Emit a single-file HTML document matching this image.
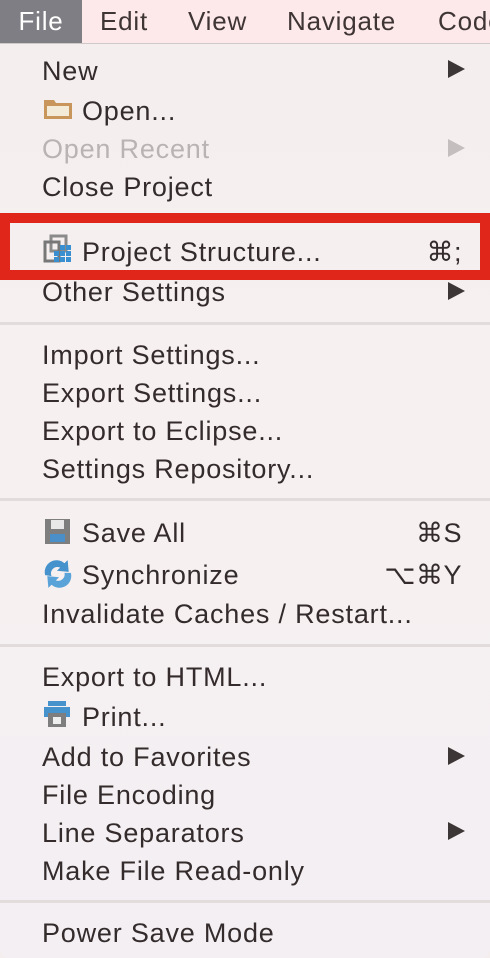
<!DOCTYPE html>
<html><head><meta charset="utf-8"><style>
html,body{margin:0;padding:0}
body{width:490px;height:958px;position:relative;overflow:hidden;background:#f4eeee;font-family:"Liberation Sans",Arial,sans-serif;}
.bg{position:absolute;left:0;top:44px;width:490px;height:914px;background:linear-gradient(180deg,#f4eeee 0%,#f7f0f0 40%,#f3eff3 100%);border-bottom-left-radius:10px;border-bottom-right-radius:10px}
.bar{position:absolute;left:0;top:0;width:490px;height:43px;background:#fde9ea;border-bottom:1.5px solid #cfc8c8}
.m{position:absolute;top:0;height:43px;line-height:43px;font-size:26px;letter-spacing:0.8px;color:#3f3535}
.file{left:0;width:82px;background:#7f7e84;color:#fff;text-align:center}
.r{position:absolute;left:42px;font-size:27px;letter-spacing:0.8px;line-height:30px;height:30px;color:#342c2c;white-space:nowrap}
.dis{color:#b9b3b3}
.ic{left:82px}
.sc{position:absolute;right:28px;font-size:27px;line-height:30px;color:#342c2c;letter-spacing:0.5px}
.tri{position:absolute;left:448px;width:0;height:0;border-top:9.5px solid transparent;border-bottom:9.5px solid transparent;border-left:17px solid #3d3636}
.sep{position:absolute;left:0;width:490px;height:3px;background:#e3dcdc}
.red{position:absolute;left:0;top:213px;width:470px;height:47px;border:10px solid #e0261a}
svg{position:absolute}
</style></head><body>
<div class="bg"></div>
<div class="bar"></div>
<div class="m file">File</div>
<div class="m" style="left:100px">Edit</div>
<div class="m" style="left:188px">View</div>
<div class="m" style="left:287px">Navigate</div>
<div class="m" style="left:438px">Code</div>

<div class="r" style="top:56px">New</div><div class="tri" style="top:60px"></div>
<svg style="left:43px;top:98px" width="30" height="22" viewBox="0 0 30 22"><path d="M1 2h10l2 3h16v16H1z" fill="#c8965a"/><rect x="4" y="8" width="22" height="10" fill="#f3ead8"/></svg>
<div class="r ic" style="top:96px">Open...</div>
<div class="r dis" style="top:134px">Open Recent</div><div class="tri" style="top:139px;border-left-color:#c4bebe"></div>
<div class="r" style="top:172px">Close Project</div>

<div class="red"></div>
<svg style="left:43px;top:234px" width="30" height="30" viewBox="0 0 30 30"><rect x="8" y="2" width="15" height="15" fill="none" stroke="#8a8a8a" stroke-width="3"/><rect x="2" y="8" width="14" height="19" fill="none" stroke="#777" stroke-width="3"/><g fill="#3a8fd0"><rect x="17" y="11" width="5" height="5"/><rect x="23" y="11" width="5" height="5"/><rect x="11" y="17" width="5" height="5"/><rect x="17" y="17" width="5" height="5"/><rect x="23" y="17" width="5" height="5"/><rect x="11" y="23" width="5" height="5"/><rect x="17" y="23" width="5" height="5"/><rect x="23" y="23" width="5" height="5"/></g></svg>
<div class="r ic" style="top:237px">Project Structure...</div><div class="sc" style="top:237px">⌘;</div>
<div class="r" style="top:277px">Other Settings</div><div class="tri" style="top:282px"></div>
<div class="sep" style="top:322px"></div>

<div class="r" style="top:340px">Import Settings...</div>
<div class="r" style="top:378px">Export Settings...</div>
<div class="r" style="top:416px">Export to Eclipse...</div>
<div class="r" style="top:454px">Settings Repository...</div>
<div class="sep" style="top:498px"></div>

<svg style="left:45px;top:519px" width="26" height="26" viewBox="0 0 26 26"><rect x="0" y="0" width="25" height="25" fill="#7e7e7e"/><rect x="6" y="1" width="13" height="9" fill="#e8e8e8"/><rect x="5" y="15" width="15" height="8" fill="#4a8fc8"/></svg>
<div class="r ic" style="top:518px">Save All</div><div class="sc" style="top:518px">⌘S</div>
<svg style="left:43px;top:559px" width="30" height="30" viewBox="0 0 28 28"><path d="M2 15A11 11 0 0 1 20 4l3-3 1 11-11-1 3-3A6 6 0 0 0 8 16z" fill="#4592cc"/><path d="M26 13A11 11 0 0 1 8 24l-3 3-1-11 11 1-3 3a6 6 0 0 0 8-7z" fill="#5aa3d8"/></svg>
<div class="r ic" style="top:560px">Synchronize</div><div class="sc" style="top:560px">⌥⌘Y</div>
<div class="r" style="top:599px">Invalidate Caches / Restart...</div>
<div class="sep" style="top:644px"></div>

<div class="r" style="top:662px">Export to HTML...</div>
<svg style="left:44px;top:701px" width="28" height="28" viewBox="0 0 28 28"><rect x="4" y="0" width="18" height="5" fill="#4592cc"/><rect x="0" y="6" width="26" height="10" fill="#4592cc"/><rect x="4" y="12" width="18" height="14" fill="#7e7e7e"/><rect x="9" y="16" width="8" height="7" fill="#eee"/></svg>
<div class="r ic" style="top:702px">Print...</div>
<div class="r" style="top:742px">Add to Favorites</div><div class="tri" style="top:747px"></div>
<div class="r" style="top:780px">File Encoding</div>
<div class="r" style="top:818px">Line Separators</div><div class="tri" style="top:822px"></div>
<div class="r" style="top:856px">Make File Read-only</div>
<div class="sep" style="top:900px"></div>
<div class="r" style="top:918px">Power Save Mode</div>
</body></html>
